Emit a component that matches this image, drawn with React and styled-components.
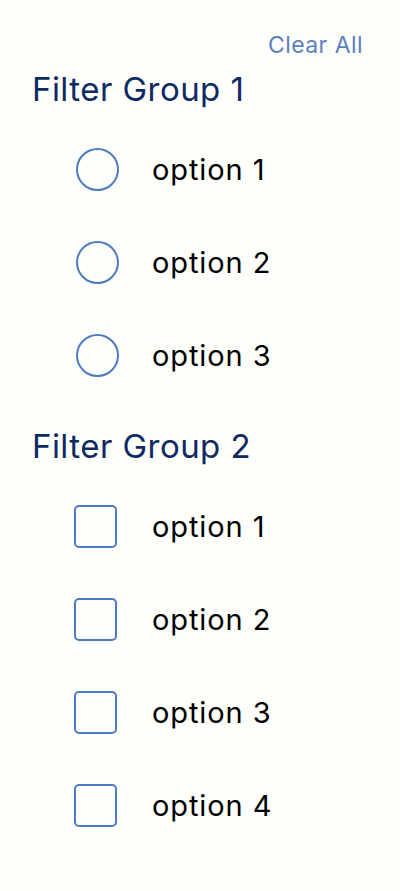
import React, { useState } from "react";
import styled, { createGlobalStyle } from "styled-components";

const GlobalStyle = createGlobalStyle`
  body {
    margin: 0;
    background: #fefefb;
    font-family: Inter, "Noto Sans", sans-serif;
  }
`;

const groups = [
  { title: "Filter Group 1", kind: "radio", options: ["option 1", "option 2", "option 3"] },
  { title: "Filter Group 2", kind: "checkbox", options: ["option 1", "option 2", "option 3", "option 4"] },
];

function App() {
  const [picked, setPicked] = useState({});

  const toggle = (key, kind, group) => {
    if (kind === "radio") {
      setPicked({ ...picked, [group]: key });
    } else {
      setPicked({ ...picked, [key]: !picked[key] });
    }
  };

  return (
    <>
      <GlobalStyle />
      <Page>
        <ClearRow>
          <ClearButton onClick={() => setPicked({})}>Clear All</ClearButton>
        </ClearRow>
        {groups.map((g) => {
          const round = g.kind === "radio";
          return (
            <Group key={g.title}>
              <GroupTitle>{g.title}</GroupTitle>
              <OptionList indent={round ? 44 : 42}>
                {g.options.map((o) => {
                  const key = g.title + o;
                  const on = round ? picked[g.title] === key : !!picked[key];
                  return (
                    <OptionRow key={key} onClick={() => toggle(key, g.kind, g.title)}>
                      <Control round={round} on={on} />
                      <OptionLabel gap={round ? 33 : 35}>{o}</OptionLabel>
                    </OptionRow>
                  );
                })}
              </OptionList>
            </Group>
          );
        })}
      </Page>
    </>
  );
}

const Page = styled.div`
  padding: 32px 37px 0 32px;
`;

const ClearRow = styled.div`
  display: flex;
  justify-content: flex-end;
  margin-bottom: 11px;
`;

const ClearButton = styled.button`
  border: none;
  background: none;
  padding: 0;
  font-family: Inter, "Noto Sans", sans-serif;
  font-size: 23px;
  letter-spacing: 0.45px;
  line-height: 26px;
  color: #5b80c2;
  cursor: pointer;
`;

const Group = styled.div`
  display: flex;
  flex-direction: column;
`;

const GroupTitle = styled.h2`
  margin: 0;
  font-size: 33px;
  letter-spacing: 0.45px;
  font-weight: 400;
  line-height: 40px;
  color: #0e2a63;
`;

const OptionList = styled.div`
  display: flex;
  flex-direction: column;
  padding: 14px 0 24px ${(p) => p.indent}px;
`;

const OptionRow = styled.label`
  display: flex;
  align-items: center;
  height: 93px;
  cursor: pointer;
`;

const Control = styled.span`
  box-sizing: border-box;
  width: 43px;
  height: 43px;
  flex: none;
  border: 2px solid #4d7bc2;
  border-radius: ${(p) => (p.round ? "50%" : "5px")};
  background: ${(p) => (p.on ? "#4d7bc2" : "transparent")};
`;

const OptionLabel = styled.span`
  margin-left: ${(p) => p.gap}px;
  font-size: 29px;
  letter-spacing: 0.9px;
  color: #000;
`;

export default App;
